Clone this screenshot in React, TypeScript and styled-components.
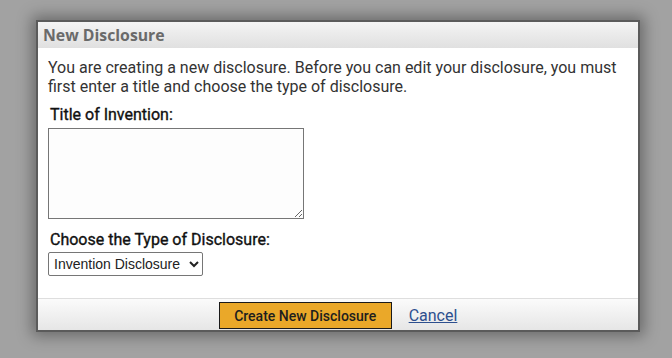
import React from "react";
import styled, { createGlobalStyle } from "styled-components";

const Global = createGlobalStyle`
  html, body { margin: 0; padding: 0; }
  body {
    background: #a2a2a2;
    width: 672px;
    height: 358px;
    overflow: hidden;
    font-family: Roboto, "Liberation Sans", Arial, sans-serif;
  }
`;

const Page = styled.div`
  display: flex;
  align-items: flex-start;
  padding: 20px 0 0 36px;
`;

const Dialog = styled.div`
  width: 604px;
  height: 312px;
  box-sizing: border-box;
  border: 2px solid #5b5b5b;
  background: #fff;
  display: flex;
  flex-direction: column;
  box-shadow: 0 0 14px 4px rgba(0, 0, 0, 0.35);
`;

const Header = styled.div`
  height: 26px;
  box-sizing: border-box;
  padding: 3px 0 0 5px;
  background: linear-gradient(#f4f4f4, #e0e0e0);
  color: #6a6a6a;
  font-family: "Open Sans", "Liberation Sans", Arial, sans-serif;
  font-weight: 700;
  font-size: 15.8px;
  line-height: 20px;
`;

const Body = styled.div`
  flex: 1;
  padding: 10px 10px 0 10px;
  display: flex;
  flex-direction: column;
  align-items: flex-start;
`;

const Intro = styled.p`
  margin: 0;
  color: #333;
  font-size: 16px;
  line-height: 19px;
`;

const Label = styled.label<{ $top: number }>`
  display: block;
  margin: ${(p) => p.$top}px 0 0 2px;
  color: #111;
  font-weight: 400;
  font-size: 16px;
  line-height: 18px;
  -webkit-text-stroke: 0.35px #111;
`;

const TitleArea = styled.textarea`
  display: block;
  width: 256px;
  height: 91px;
  box-sizing: border-box;
  margin-top: 4px;
  border: 1px solid #767676;
  background: #fdfdfd;
  resize: both;
  font-family: inherit;
`;

const Select = styled.select`
  display: block;
  width: 155px;
  height: 24px;
  box-sizing: border-box;
  margin-top: 3px;
  border: 1px solid #767676;
  border-radius: 2px;
  background: #fff;
  color: #222;
  font-family: "Liberation Sans", Arial, sans-serif;
  font-size: 14px;
  padding: 0 1px;
`;

const Footer = styled.div`
  height: 32px;
  box-sizing: border-box;
  border-top: 1px solid #dedede;
  background: linear-gradient(#fbfbfb, #e6e6e6);
  display: flex;
  align-items: flex-start;
  justify-content: center;
  gap: 17px;
  padding-top: 3px;
`;

const PrimaryButton = styled.button`
  width: 173px;
  height: 27px;
  box-sizing: border-box;
  border: 1px solid #1a1a1a;
  background: #eaa829;
  color: #1e1e1e;
  font-family: Roboto, "Liberation Sans", Arial, sans-serif;
  font-weight: 500;
  font-size: 14px;
  padding: 0;
`;

const CancelLink = styled.a`
  color: #2d4f8e;
  font-size: 16px;
  line-height: 18px;
  margin-top: 5px;
  text-decoration: underline;
  cursor: pointer;
`;

export default function App() {
  return (
    <>
      <Global />
      <Page>
        <Dialog>
          <Header>New Disclosure</Header>
          <Body>
            <Intro>
              You are creating a new disclosure. Before you can edit your disclosure, you must
              <br />
              first enter a title and choose the type of disclosure.
            </Intro>
            <Label $top={10}>Title of Invention:</Label>
            <TitleArea />
            <Label $top={12}>Choose the Type of Disclosure:</Label>
            <Select defaultValue="invention">
              <option value="invention">Invention Disclosure</option>
              <option value="software">Software Disclosure</option>
            </Select>
          </Body>
          <Footer>
            <PrimaryButton>Create New Disclosure</PrimaryButton>
            <CancelLink>Cancel</CancelLink>
          </Footer>
        </Dialog>
      </Page>
    </>
  );
}
